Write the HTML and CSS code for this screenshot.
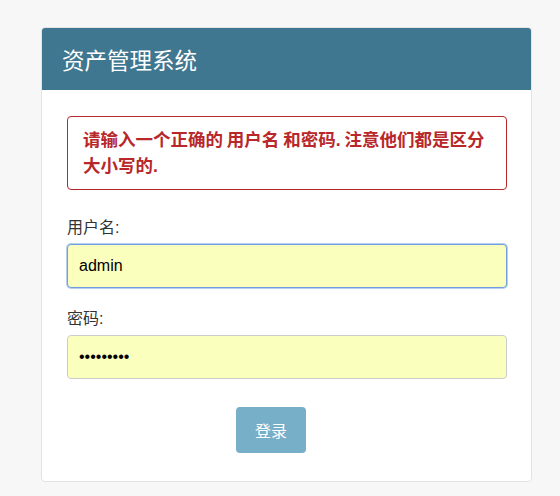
FILE: index.html
```html
<!DOCTYPE html>
<html lang="zh-CN">
<head>
  <meta charset="UTF-8">
  <meta name="viewport" content="width=device-width, initial-scale=1.0">
  <title>资产管理系统</title>
  <link rel="stylesheet" href="styles.css">
</head>
<body>
  <div class="panel">
    <div class="panel-heading">
      <h3 class="panel-title">资产管理系统</h3>
    </div>
    <div class="panel-body">
      <div class="alert">请输入一个正确的 用户名 和密码. 注意他们都是区分大小写的.</div>
      <form class="login-form">
        <label class="field-label" for="username">用户名:</label>
        <input class="field focused" type="text" id="username" name="username" value="admin">

        <label class="field-label" for="password">密码:</label>
        <input class="field" type="password" id="password" name="password" value="123456789">

        <div class="actions">
          <button type="submit" class="btn">登录</button>
        </div>
      </form>
    </div>
  </div>
</body>
</html>
```
FILE: styles.css
```css
body { margin: 0; background-color: #f7f7f7; color: #333; font-family: "Liberation Sans", "Noto Sans CJK SC", sans-serif; font-size: 16px; }
.panel { width: 489px; margin: 27px 0 0 41px; background: #fff; border: 1px solid #e3e3e3; border-radius: 4px; overflow: hidden; }
.panel-heading { background-color: #3f7690; height: 62px; display: flex; align-items: center; padding: 0 20px; }
.panel-title { margin: 0; font-size: 22.5px; font-weight: normal; color: #fff; }
.panel-body { padding: 26px 24px 28px 25px; }
.alert { border: 1px solid #b8272a; border-radius: 4px; color: #b8272a; font-weight: bold; font-size: 17.5px; line-height: 26px; padding: 10px 6px 10px 15px; word-spacing: -1px; }
.login-form { display: flex; flex-direction: column; }
.field-label { display: block; margin-top: 27px; line-height: 22px; }
.field-label + .field { margin-top: 5px; }
.field + .field-label { margin-top: 20px; }
.field { box-sizing: border-box; width: 100%; height: 44px; padding: 0 11px; font-family: inherit; font-size: 16px; color: #000; background-color: #faffbd; border: 1px solid #ccc; border-radius: 4px; outline: none; }
.field.focused { border-color: #6f9fe2; box-shadow: 0 0 0 1px rgba(111, 159, 226, 0.5); }
.actions { display: flex; padding-left: 169px; margin-top: 28px; }
.btn { width: 70px; height: 46px; padding: 0; background-color: #77aec8; color: #fff; font-family: inherit; font-size: 16px; border: none; border-radius: 4px; cursor: pointer; }
```
